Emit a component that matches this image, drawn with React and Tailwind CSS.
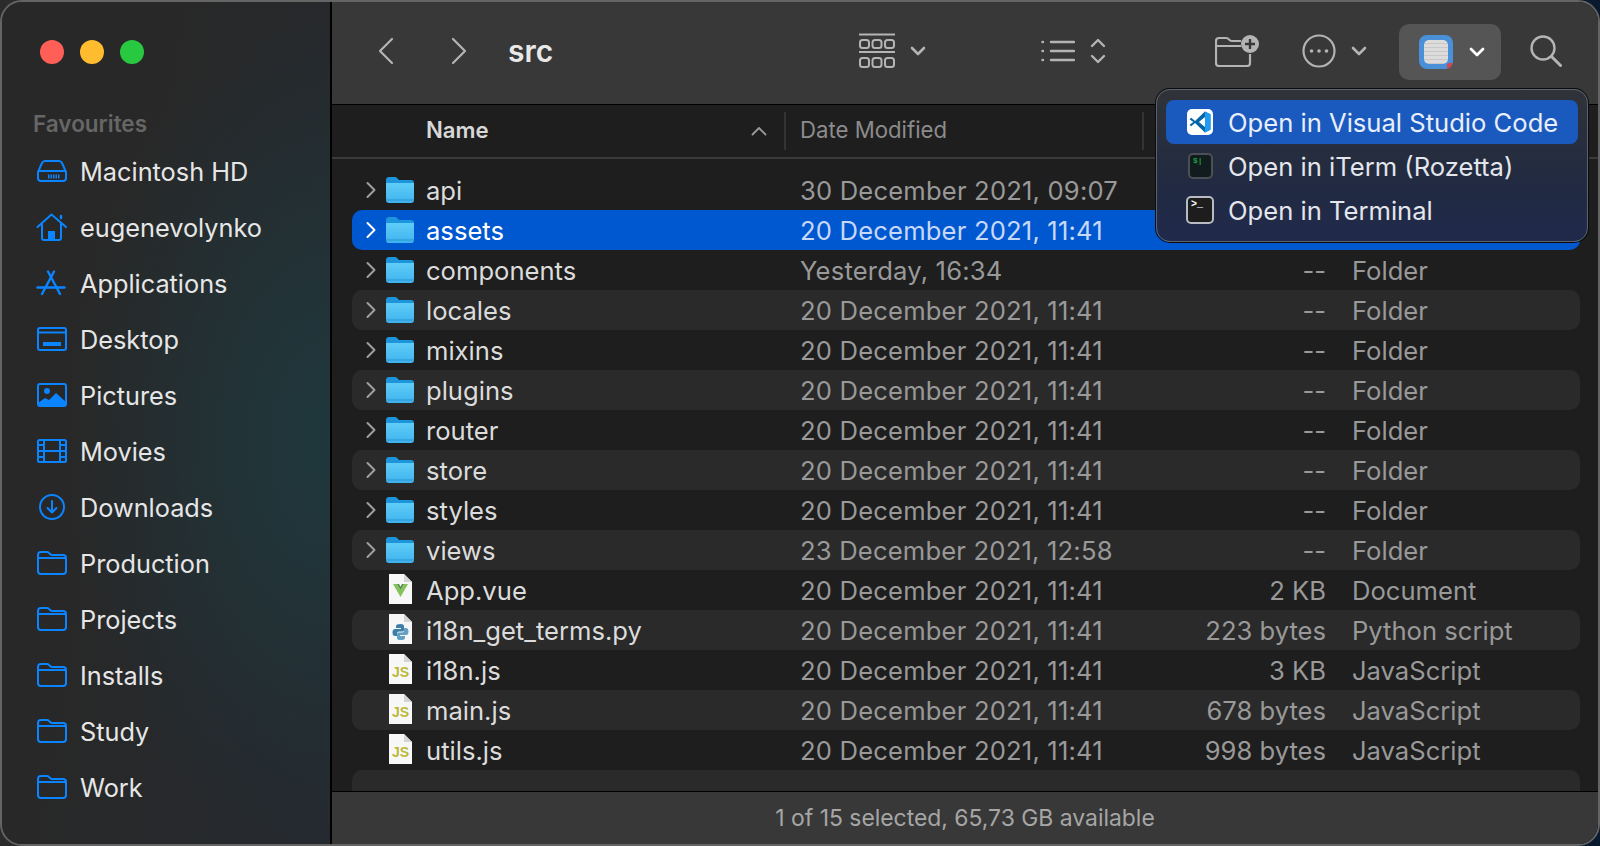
import React from 'react';

const places = [
  ['Macintosh HD', HddIcon],
  ['eugenevolynko', HomeIcon],
  ['Applications', AppsIcon],
  ['Desktop', DesktopIcon],
  ['Pictures', PicturesIcon],
  ['Movies', MoviesIcon],
  ['Downloads', DownloadsIcon],
  ['Production', FolderLine],
  ['Projects', FolderLine],
  ['Installs', FolderLine],
  ['Study', FolderLine],
  ['Work', FolderLine],
];

// size and kind of the first two rows sit under the open menu
const files = [
  ['api', '30 December 2021, 09:07', '', '', 'dir'],
  ['assets', '20 December 2021, 11:41', '', '', 'dir'],
  ['components', 'Yesterday, 16:34', '--', 'Folder', 'dir'],
  ['locales', '20 December 2021, 11:41', '--', 'Folder', 'dir'],
  ['mixins', '20 December 2021, 11:41', '--', 'Folder', 'dir'],
  ['plugins', '20 December 2021, 11:41', '--', 'Folder', 'dir'],
  ['router', '20 December 2021, 11:41', '--', 'Folder', 'dir'],
  ['store', '20 December 2021, 11:41', '--', 'Folder', 'dir'],
  ['styles', '20 December 2021, 11:41', '--', 'Folder', 'dir'],
  ['views', '23 December 2021, 12:58', '--', 'Folder', 'dir'],
  ['App.vue', '20 December 2021, 11:41', '2 KB', 'Document', 'vue'],
  ['i18n_get_terms.py', '20 December 2021, 11:41', '223 bytes', 'Python script', 'py'],
  ['i18n.js', '20 December 2021, 11:41', '3 KB', 'JavaScript', 'js'],
  ['main.js', '20 December 2021, 11:41', '678 bytes', 'JavaScript', 'js'],
  ['utils.js', '20 December 2021, 11:41', '998 bytes', 'JavaScript', 'js'],
];

function HddIcon() {
  return (
    <svg width="32" height="24" viewBox="0 0 32 24" fill="none" stroke="#0a84ff" strokeWidth="2">
      <path d="M9 2h14q2 0 3 2l4 9v6q0 3-3 3H5q-3 0-3-3v-6l4-9q1-2 3-2z" />
      <path d="M3 12h26" />
      <path d="M12 17.500h12" strokeWidth="4" strokeDasharray="1.500 1" />
    </svg>
  );
}

function HomeIcon() {
  return (
    <svg width="32" height="28" viewBox="0 0 32 28" fill="none" stroke="#0a84ff" strokeWidth="2" strokeLinecap="round" strokeLinejoin="round">
      <path d="M1.500 14 15.500 1.500 30 14" />
      <path d="M6 10v15q0 2 2 2h15q2 0 2-2V10" />
      <path d="M25 5V3" strokeWidth="2.500" />
      <path d="M12 27v-9h7v9z" fill="#0a84ff" stroke="none" />
    </svg>
  );
}

function AppsIcon() {
  return (
    <svg width="30" height="26" viewBox="0 0 30 26" fill="none" stroke="#0a84ff" strokeWidth="2.400" strokeLinecap="round">
      <path d="M12 1.500 24 24" />
      <path d="M18 1.500 6 24" />
      <path d="M1.500 17.500h27" />
    </svg>
  );
}

function DesktopIcon() {
  return (
    <svg width="32" height="24" viewBox="0 0 32 24" fill="none" stroke="#0a84ff" strokeWidth="2">
      <rect x="2" y="1" width="28" height="22" rx="2" />
      <path d="M2 5.500h28" />
      <rect x="7" y="15" width="18" height="4" fill="#0a84ff" stroke="none" />
    </svg>
  );
}

function PicturesIcon() {
  return (
    <svg width="32" height="24" viewBox="0 0 32 24" fill="none">
      <rect x="2" y="1" width="28" height="22" rx="2" stroke="#0a84ff" strokeWidth="2" />
      <circle cx="11" cy="8" r="3" fill="#0a84ff" />
      <path d="M2 20l7-5 4 2 7-7 10 9v2q0 2-2 2H4q-2 0-2-2z" fill="#0a84ff" />
    </svg>
  );
}

function MoviesIcon() {
  return (
    <svg width="32" height="24" viewBox="0 0 32 24" fill="none" stroke="#0a84ff" strokeWidth="2">
      <rect x="2" y="1" width="28" height="22" rx="1.500" />
      <path d="M8 1v22M24 1v22M8 12h16M2 6h6M2 12h6M2 18h6M24 6h6M24 12h6M24 18h6" />
    </svg>
  );
}

function DownloadsIcon() {
  return (
    <svg width="32" height="26" viewBox="0 0 32 26" fill="none" stroke="#0a84ff" strokeWidth="2" strokeLinecap="round" strokeLinejoin="round">
      <circle cx="16" cy="13" r="12" />
      <path d="M16 7v11.500M11.500 14l4.500 4.500 4.500-4.500" />
    </svg>
  );
}

function FolderLine() {
  return (
    <svg width="32" height="24" viewBox="0 0 32 24" fill="none" stroke="#0a84ff" strokeWidth="2">
      <path d="M2 4q0-3 3-3h6q1.500 0 3 2 1 1 2.500 1H27q3 0 3 3v13q0 3-3 3H5q-3 0-3-3z" />
      <path d="M2 7h28" />
    </svg>
  );
}

function Chevron({ color }) {
  return (
    <svg width="14" height="20" viewBox="0 0 14 20" fill="none" stroke={color} strokeWidth="2" strokeLinecap="round" strokeLinejoin="round">
      <path d="M3.500 3 10.500 10 3.500 17" />
    </svg>
  );
}

function FolderFill() {
  return (
    <svg width="28" height="26" viewBox="0 0 28 26">
      <defs>
        <linearGradient id="folderBody" x1="0" y1="0" x2="0" y2="1">
          <stop offset="0" stopColor="#5fcdf8" />
          <stop offset="1" stopColor="#3fb3ee" />
        </linearGradient>
      </defs>
      <path d="M0 3q0-3 3-3h6q2 0 3 2l1 1h12q3 0 3 3v3H0z" fill="#1d95dc" />
      <path d="M0 6h28v17q0 3-3 3H3q-3 0-3-3z" fill="url(#folderBody)" />
      <rect x="0" y="22.500" width="28" height="1" fill="#2a93d6" />
    </svg>
  );
}

function FilePage({ children }) {
  return (
    <svg width="24" height="30" viewBox="0 0 24 30">
      <path d="M1 0h15l8 8v22H1z" fill="#f7f7f7" />
      <path d="M16 0v8h8z" fill="#d5d5d5" />
      {children}
    </svg>
  );
}

function FileIcon({ kind }) {
  if (kind === 'dir') return <FolderFill />;
  if (kind === 'vue') {
    return (
      <span className="-mt-[2px] ml-[2px] flex">
        <FilePage>
          <path d="M5 10h4l3.500 6 3.500-6h4l-7.500 13z" fill="#86c25a" />
          <path d="M9 10h2l1.500 2.800L14 10h2l-3.500 6z" fill="#4e8c4b" />
        </FilePage>
      </span>
    );
  }
  if (kind === 'py') {
    return (
      <span className="-mt-[2px] ml-[2px] flex">
        <FilePage>
          <path d="M12.500 10q-4.500 0-4.500 2v2h5v1H7q-2.500 0-2.500 3.500T7 22h2v-2.500q0-2 2-2h3.500q1.500 0 1.500-2V12q0-2-3.500-2z" fill="#3d7fa8" />
          <path d="M12.500 26q4.500 0 4.500-2v-2h-5v-1h6q2.500 0 2.500-3.500T18 14h-2v2.500q0 2-2 2h-3.500q-1.500 0-1.500 2V24q0 2 3.500 2z" fill="#63a0c4" />
        </FilePage>
      </span>
    );
  }
  return (
    <span className="-mt-[2px] ml-[2px] flex">
      <FilePage>
        <text x="12.500" y="23" textAnchor="middle" fontFamily="Liberation Sans" fontWeight="700" fontSize="14" fill="#bdb83a">JS</text>
      </FilePage>
    </span>
  );
}

function Row({ file, index }) {
  const [name, date, size, kind, type] = file;
  const selected = name === 'assets';
  const striped = index % 2 === 1;
  return (
    <div className={`flex h-[40px] items-center rounded-[10px] text-[25.600px] ${selected ? 'bg-[#0058d0]' : striped ? 'bg-[#2a2a2a]' : ''}`}>
      <div className="flex w-[74px] shrink-0 items-center">
        <span className="flex w-[34px] shrink-0 justify-center pl-[3px]">
          {type === 'dir' && <Chevron color={selected ? '#ffffff' : '#a0a0a0'} />}
        </span>
        <FileIcon kind={type} />
      </div>
      <div className={`w-[374px] shrink-0 pt-[2px] ${selected ? 'text-white' : 'text-[#dcdcdc]'}`}>{name}</div>
      <div className={`w-[400px] shrink-0 pt-[2px] tracking-[0.18px] ${selected ? 'text-[#c8d8f8]' : 'text-[#999999]'}`}>{date}</div>
      <div className="w-[126px] shrink-0 pt-[2px] text-right text-[#999999]">{size}</div>
      <div className="ml-[26px] pt-[2px] text-[#999999]">{kind}</div>
    </div>
  );
}

function Sidebar() {
  return (
    <aside className="flex w-[330px] shrink-0 flex-col border-r-2 border-black bg-[radial-gradient(ellipse_260px_420px_at_100%_52%,#1f383d_0%,#22343a00_100%),linear-gradient(100deg,#282828_35%,#25292f_100%)] pl-[34px] pt-[38px]">
      <div className="flex gap-[16px] pl-[4px]">
        <span className="h-[24px] w-[24px] rounded-full bg-[#ff5f57]" />
        <span className="h-[24px] w-[24px] rounded-full bg-[#febc2e]" />
        <span className="h-[24px] w-[24px] rounded-full bg-[#28c840]" />
      </div>
      <div className="-ml-[3px] mt-[46px] h-[28px] text-[22.500px] font-semibold leading-[28px] text-[#666666]">Favourites</div>
      <div className="mt-[5px]">
        {places.map(([label, Icon]) => (
          <div key={label} className="flex h-[56px] items-center text-[25.300px] text-[#e6e6e6]">
            <span className="flex w-[44px] shrink-0 items-center">
              <Icon />
            </span>
            <span className="pt-[1px]">{label}</span>
          </div>
        ))}
      </div>
    </aside>
  );
}

function Toolbar() {
  const s = '#b4b4b4';
  return (
    <div className="flex h-[103px] shrink-0 items-center border-b border-black bg-[#383838] pb-[4px]">
      <svg className="ml-[45px] shrink-0" width="18" height="28" viewBox="0 0 18 28" fill="none" stroke={s} strokeWidth="2.200" strokeLinecap="round" strokeLinejoin="round">
        <path d="M15 2 3 14l12 12" />
      </svg>
      <svg className="ml-[55px] shrink-0" width="18" height="28" viewBox="0 0 18 28" fill="none" stroke={s} strokeWidth="2.200" strokeLinecap="round" strokeLinejoin="round">
        <path d="M3 2l12 12L3 26" />
      </svg>
      <div className="ml-[40px] w-[351px] shrink-0 text-[30px] font-semibold text-[#e8e8e8]">src</div>
      <svg className="shrink-0" width="36" height="36" viewBox="0 0 36 36" fill="none" stroke={s} strokeWidth="2">
        <path d="M0 1.500h36M0 19h36" />
        <rect x="1" y="7" width="9" height="8" rx="2.500" />
        <rect x="13.500" y="7" width="9" height="8" rx="2.500" />
        <rect x="26" y="7" width="9" height="8" rx="2.500" />
        <rect x="1" y="25" width="9" height="9" rx="2.500" />
        <rect x="13.500" y="25" width="9" height="9" rx="2.500" />
        <rect x="26" y="25" width="9" height="9" rx="2.500" />
      </svg>
      <svg className="ml-[15px] shrink-0" width="16" height="10" viewBox="0 0 16 10" fill="none" stroke={s} strokeWidth="2.600" strokeLinecap="round" strokeLinejoin="round">
        <path d="M2 2l6 6 6-6" />
      </svg>
      <svg className="ml-[115px] shrink-0" width="34" height="24" viewBox="0 0 34 24" fill="none" stroke={s} strokeWidth="2.400" strokeLinecap="round">
        <path d="M10 3h23M10 12h23M10 21h23M1.500 3h.5M1.500 12h.5M1.500 21h.5" />
      </svg>
      <svg className="ml-[15px] shrink-0" width="16" height="28" viewBox="0 0 16 28" fill="none" stroke={s} strokeWidth="2.400" strokeLinecap="round" strokeLinejoin="round">
        <path d="M2 9l6-6 6 6M2 19l6 6 6-6" />
      </svg>
      <svg className="ml-[109px] shrink-0" width="44" height="32" viewBox="0 0 44 32" fill="none" stroke={s} strokeWidth="2.200" strokeLinejoin="round">
        <path d="M1 6q0-3 3-3h7q2 0 3 1.500T17 6h9M1 11h25M1 6v22q0 3 3 3h28q3 0 3-3v-9" />
        <circle cx="35" cy="9" r="9" fill={s} stroke="none" />
        <path d="M35 4v10M30 9h10" stroke="#383838" strokeWidth="2.400" />
      </svg>
      <svg className="ml-[43px] shrink-0" width="34" height="34" viewBox="0 0 34 34" fill="none" stroke={s} strokeWidth="2.200">
        <circle cx="17" cy="17" r="15.500" />
        <circle cx="9.500" cy="17" r="1.800" fill={s} stroke="none" />
        <circle cx="17" cy="17" r="1.800" fill={s} stroke="none" />
        <circle cx="24.500" cy="17" r="1.800" fill={s} stroke="none" />
      </svg>
      <svg className="ml-[15px] shrink-0" width="16" height="10" viewBox="0 0 16 10" fill="none" stroke={s} strokeWidth="2.600" strokeLinecap="round" strokeLinejoin="round">
        <path d="M2 2l6 6 6-6" />
      </svg>
      <div className="ml-[32px] mt-[2px] flex h-[56px] w-[102px] shrink-0 items-center rounded-[10px] bg-[#555555] pl-[20px]">
        <span className="relative flex h-[34px] w-[34px] items-center justify-center overflow-hidden rounded-[8px] bg-[#4a90d9]">
          <span className="h-[24px] w-[24px] rounded-[5px] bg-[repeating-linear-gradient(180deg,#dcdcdc_0px,#dcdcdc_3px,#c8c8c8_3px,#c8c8c8_4px)]" />
          <span className="absolute bottom-0 right-0 h-[6px] w-[6px] rounded-tl-[3px] bg-[#d9434a]" />
        </span>
        <svg className="ml-[16px]" width="16" height="10" viewBox="0 0 16 10" fill="none" stroke="#ffffff" strokeWidth="2.800" strokeLinecap="round" strokeLinejoin="round">
          <path d="M2 2l6 6 6-6" />
        </svg>
      </div>
      <svg className="ml-[29px] shrink-0" width="32" height="32" viewBox="0 0 32 32" fill="none" stroke={s} strokeWidth="2.400" strokeLinecap="round">
        <circle cx="13" cy="13" r="11.500" />
        <path d="M21.500 21.500 30.500 30.500" strokeWidth="3" />
      </svg>
    </div>
  );
}

function ColumnHeader() {
  return (
    <div className="flex h-[54px] shrink-0 items-center border-b-2 border-[#3a3a3a] bg-[#1e1e1e] text-[22.200px]">
      <div className="ml-[94px] w-[325px] shrink-0 pb-[2px] font-semibold text-[#d8d8d8]">Name</div>
      <svg className="shrink-0" width="16" height="10" viewBox="0 0 16 10" fill="none" stroke="#9a9a9a" strokeWidth="1.800" strokeLinecap="round" strokeLinejoin="round">
        <path d="M1.500 8.500 8 2l6.500 6.500" />
      </svg>
      <span className="ml-[17px] h-[38px] w-[2px] shrink-0 bg-[#343434]" />
      <div className="ml-[14px] w-[342px] shrink-0 pb-[2px] text-[#8c8c8c]">Date Modified</div>
      <span className="h-[38px] w-[2px] shrink-0 bg-[#343434]" />
    </div>
  );
}

function VsCodeIcon() {
  return (
    <span className="flex h-[26px] w-[26px] shrink-0 items-center justify-center rounded-[5px] bg-white">
      <svg width="22" height="22" viewBox="0 0 20 20">
        <path d="M14.500 0.500 19.500 3v14l-5 2.500L5.500 11l-3.500 2.800L0.500 12.500 4 10 0.500 7.500 2 6.200 5.500 9z" fill="#0065a9" />
        <path d="M14.500 0.500 19.500 3v14l-5 2.500z" fill="#1f9cf0" />
        <path d="M14.500 5.500 9 10l5.500 4.500z" fill="#ffffff" />
      </svg>
    </span>
  );
}

function OpenInMenu() {
  return (
    <div className="absolute left-[1154px] top-[87px] flex h-[153px] w-[432px] flex-col rounded-[14px] border border-[#5c6270] bg-[linear-gradient(180deg,#303338_0%,#222b40_55%,#20294a_100%)] px-[9px] pt-[10px] shadow-[0_0_0_1px_#0c0c0c]">
      <div className="flex h-[44px] items-center rounded-[8px] bg-[#1a5abf] pl-[21px] text-[25.600px] text-[#e8eefa]">
        <VsCodeIcon />
        <span className="ml-[15px] pt-[2px]">Open in Visual Studio Code</span>
      </div>
      <div className="flex h-[44px] items-center pl-[22px] text-[25.600px] text-[#e4e6ec]">
        <span className="flex h-[26px] w-[25px] items-start rounded-[5px] border-2 border-[#4b5054] bg-[#111c1f] pl-[3px] font-['Liberation_Mono'] text-[8px] font-bold leading-[12px] text-[#1f9a3c]">$|</span>
        <span className="ml-[15px] pt-[2px]">Open in iTerm (Rozetta)</span>
      </div>
      <div className="flex h-[44px] items-center pl-[20px] text-[25.600px] text-[#e4e6ec]">
        <span className="flex h-[28px] w-[28px] items-start rounded-[5px] border-2 border-[#b8bcc2] bg-[#1d1d1d] pl-[3px] font-['Liberation_Mono'] text-[10px] font-bold leading-[14px] text-white">&gt;_</span>
        <span className="ml-[14px] pt-[2px]">Open in Terminal</span>
      </div>
    </div>
  );
}

export default function App() {
  return (
    <div className="h-[846px] w-[1600px] overflow-hidden bg-[linear-gradient(90deg,#2b2b2b_50%,#0a1a2e_50%)] font-['Inter','Liberation_Sans',sans-serif] antialiased">
      <div className="relative flex h-[846px] w-[1600px] overflow-hidden rounded-[22px] border-2 border-[#646464]">
        <Sidebar />
        <main className="flex min-w-0 flex-1 flex-col bg-[#1e1e1e]">
          <Toolbar />
          <ColumnHeader />
          <div className="min-h-0 flex-1 overflow-hidden pl-[20px] pr-[18px] pt-[11px]">
            {files.map((file, i) => (
              <Row key={file[0]} file={file} index={i} />
            ))}
            <div className="h-[40px] rounded-[10px] bg-[#2a2a2a]" />
          </div>
          <div className="flex h-[53px] shrink-0 items-center justify-center border-t border-black bg-[#383838] text-[22.900px] text-[#a6a6a6]">
            1 of 15 selected, 65,73 GB available
          </div>
        </main>
        <OpenInMenu />
      </div>
    </div>
  );
}
